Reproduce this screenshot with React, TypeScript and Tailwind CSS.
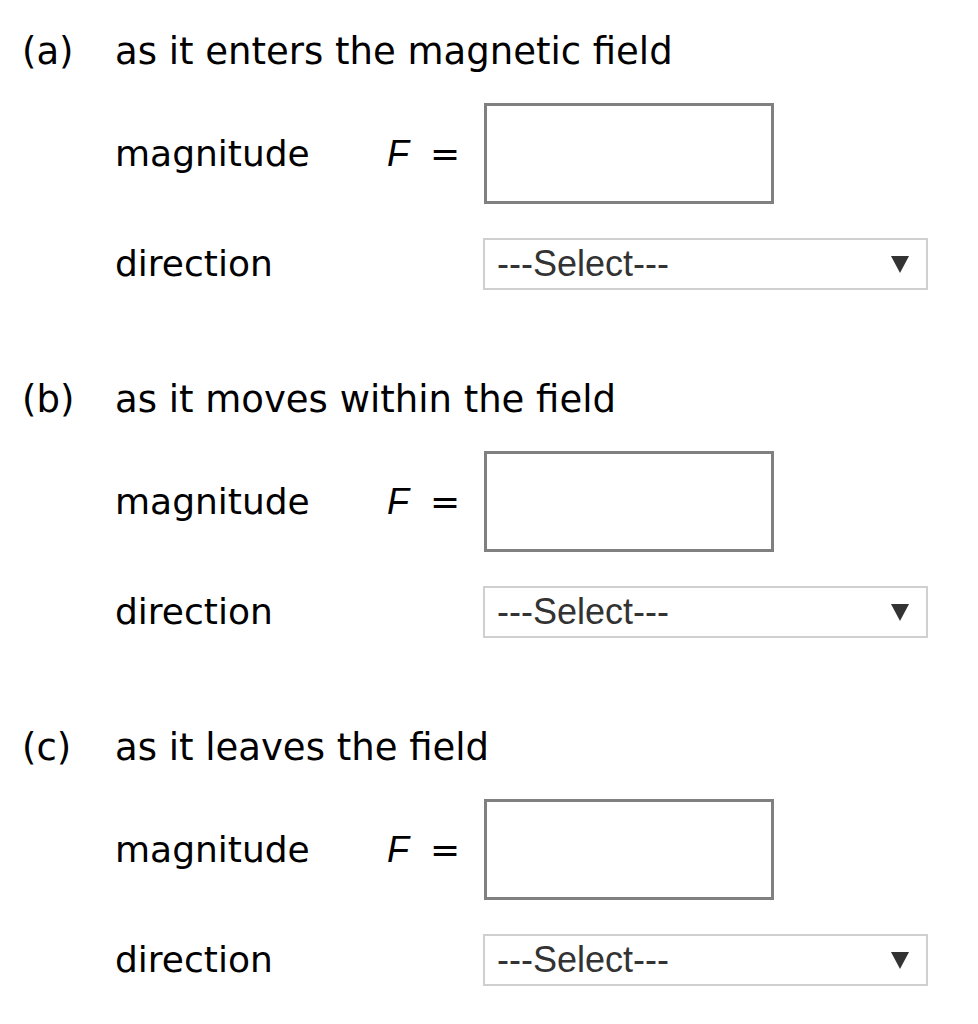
const sections = [
  { tag: '(a)', title: 'as it enters the magnetic field' },
  { tag: '(b)', title: 'as it moves within the field' },
  { tag: '(c)', title: 'as it leaves the field' },
];

const verdana = "font-['DejaVu_Sans',Verdana,sans-serif]";

const Part = ({ tag, title }: { tag: string; title: string }) => (
  <div className="pt-[25px] pb-[57px]">
    <div className={`flex h-[54px] items-center text-[37px] text-black ${verdana}`}>
      <span className="w-[93px]">{tag}</span>
      <span>{title}</span>
    </div>

    <div className="ml-[93px] mt-[24px] flex items-center text-[36px] text-black">
      <span className={`w-[272px] ${verdana}`}>magnitude</span>
      <span className="font-['Liberation_Sans',Arial,sans-serif] italic text-[36px]">F</span>
      <span className={`ml-[21px] ${verdana}`}>=</span>
      <input
        type="text"
        className="ml-[24px] h-[101px] w-[290px] border-[3px] border-[#808080] bg-white outline-none"
      />
    </div>

    <div className="ml-[93px] mt-[33px] flex items-center text-[36px] text-black">
      <span className={`w-[368px] ${verdana}`}>direction</span>
      <div className="flex h-[52px] w-[445px] items-center justify-between border-2 border-[#d0d0d0] bg-white pl-[12px] pr-[17px] font-['Liberation_Sans',Arial,sans-serif] text-[36px] text-[#333]">
        <span>---Select---</span>
        <svg width="18" height="17" viewBox="0 0 18 17">
          <path d="M0 0 H18 L9 17 Z" fill="#333" />
        </svg>
      </div>
    </div>
  </div>
);

export default function App() {
  return (
    <div className="min-h-[1024px] w-[978px] bg-white pl-[22px]">
      {sections.map((s) => (
        <Part key={s.tag} tag={s.tag} title={s.title} />
      ))}
    </div>
  );
}
